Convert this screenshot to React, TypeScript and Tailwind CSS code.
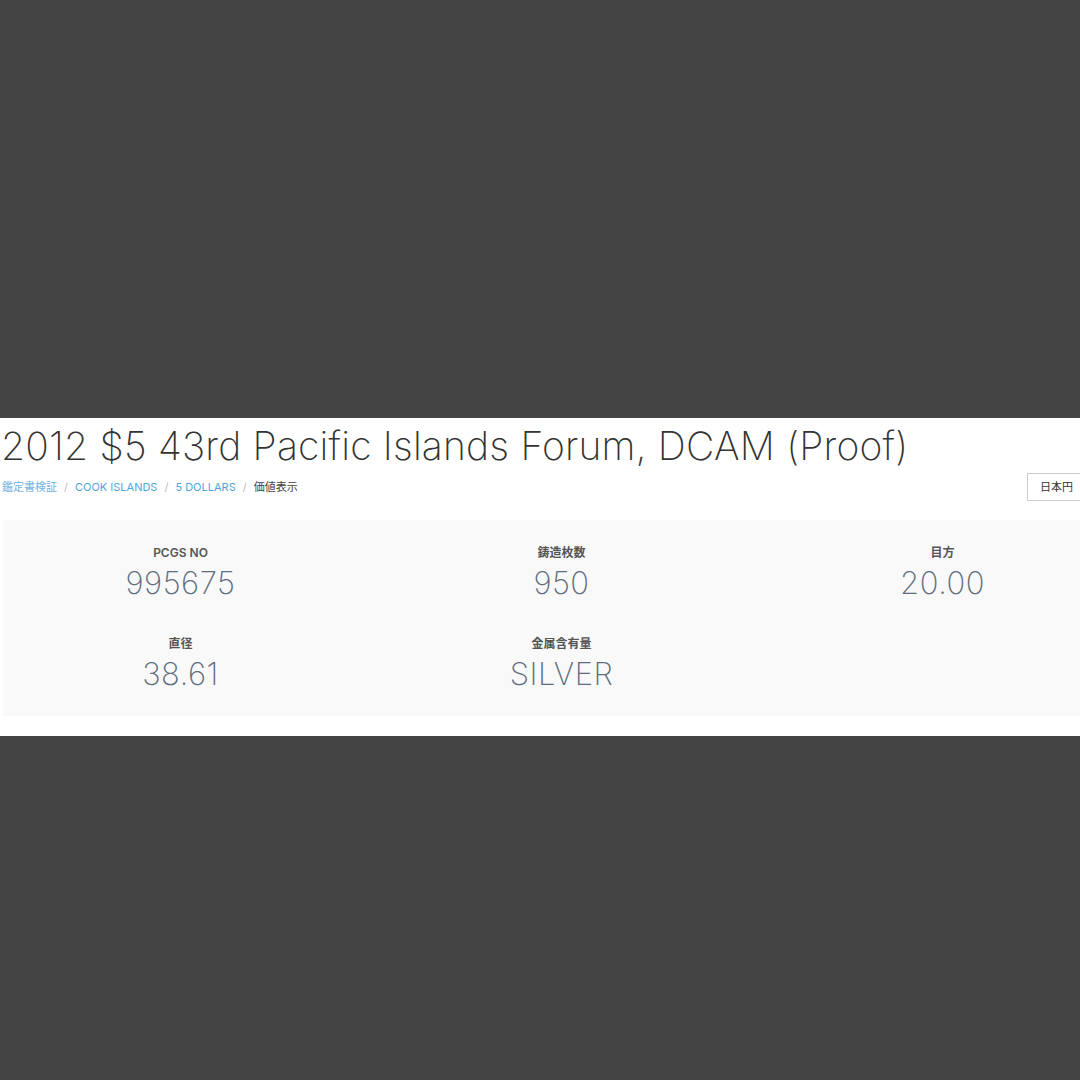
import React from 'react';

const FONT = "font-['Inter','Noto_Sans_CJK_JP',sans-serif]";

interface Stat {
  label: string;
  value: string;
}

const stats: Stat[] = [
  { label: 'PCGS NO', value: '995675' },
  { label: '鋳造枚数', value: '950' },
  { label: '目方', value: '20.00' },
  { label: '直径', value: '38.61' },
  { label: '金属含有量', value: 'SILVER' },
];

function StatCell({ label, value }: Stat) {
  return (
    <div className="flex flex-col items-center">
      <div className="text-[12px] font-semibold leading-[16px] text-[#555]">{label}</div>
      <div className="mt-[5px] text-[31px] font-[250] leading-[34px] tracking-[0.5px] text-[#5f6d7d]">
        {value}
      </div>
    </div>
  );
}

export default function App() {
  return (
    <div className={`${FONT} flex h-[1080px] w-[1080px] flex-col overflow-hidden bg-[#444444]`}>
      <div className="mt-[418px] h-[318px] w-full overflow-hidden bg-white">
        {/* Title */}
        <h1 className="ml-[1px] mt-[6px] whitespace-nowrap text-[39px] font-[250] leading-[44px] tracking-[0.2px] text-[#333]">
          2012 $5 43rd Pacific Islands Forum, DCAM (Proof)
        </h1>

        {/* Breadcrumb + currency */}
        <div className="mt-[5px] flex items-start justify-between">
          <div className="ml-[2px] mt-[7px] flex items-center gap-[7px] text-[11px] leading-[14px]">
            <span className="text-[#6fb3e0]">鑑定書検証</span>
            <span className="text-[#bbb]">/</span>
            <span className="text-[#4ea6dc]">COOK ISLANDS</span>
            <span className="text-[#bbb]">/</span>
            <span className="text-[#4ea6dc]">5 DOLLARS</span>
            <span className="text-[#bbb]">/</span>
            <span className="text-[#444]">価値表示</span>
          </div>
          <button className="-mr-[6px] h-[28px] shrink-0 whitespace-nowrap border border-[#ccc] bg-white px-[12px] text-[11px] text-[#333]">
            日本円
          </button>
        </div>

        {/* Stats panel */}
        <div className="ml-[3px] mt-[19px] h-[196px] overflow-hidden bg-[#f9f9f9]">
          <div className="-ml-[13px] grid w-[1143px] grid-cols-3 gap-y-[36px] pt-[25px]">
            {stats.map((s) => (
              <StatCell key={s.label} {...s} />
            ))}
          </div>
        </div>
      </div>
    </div>
  );
}
